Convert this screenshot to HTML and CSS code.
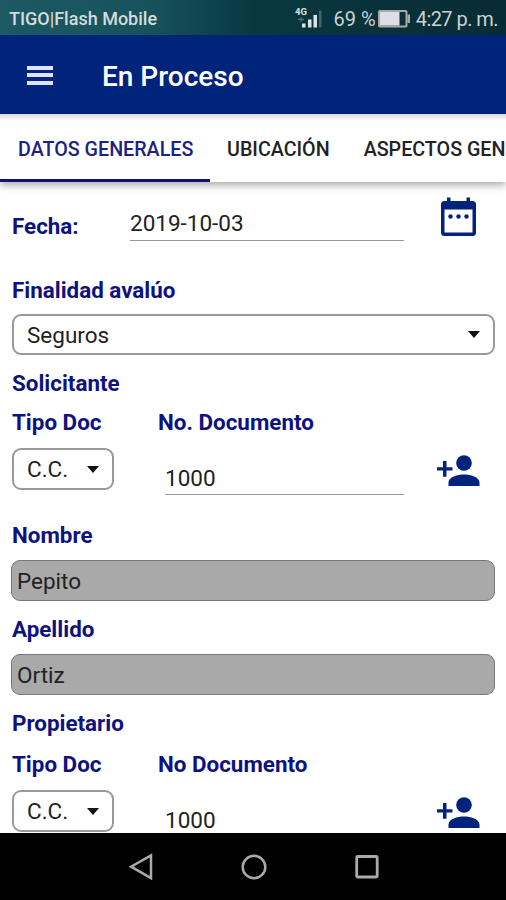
FILE: index.html
```html
<!DOCTYPE html>
<html lang="es">
<head>
  <meta charset="UTF-8">
  <meta name="viewport" content="width=device-width, initial-scale=1.0">
  <title>En Proceso</title>
  <link rel="stylesheet" href="styles.css">
</head>
<body>
  <div class="phone">
    <div class="status-bar">
      <span class="carrier">TIGO|Flash Mobile</span>
      <svg class="signal" width="30" height="26" viewBox="0 0 30 26">
        <text x="0" y="9" font-size="9.5" font-weight="700" fill="#dde3e4">4G</text>
        <g fill="#dde3e4">
          <rect x="7" y="17.5" width="3.5" height="4"/>
          <rect x="13" y="13.5" width="3.5" height="8"/>
          <rect x="18.5" y="9" width="3.5" height="12.5"/>
        </g>
        <rect x="24" y="4.5" width="2.5" height="17" fill="#47636a"/>
        <path d="M3 13.500h6M6 11.500v4" stroke="#477078" stroke-width="1.5"/>
      </svg>
      <span class="percent">69 %</span>
      <svg class="battery" width="33" height="18" viewBox="0 0 33 18">
        <rect x="1" y="1" width="27.5" height="15.5" rx="1" fill="none" stroke="#aaa8a8" stroke-width="2"/>
        <rect x="2" y="2" width="19.5" height="13.5" fill="#dedee6"/>
        <rect x="29.5" y="4.5" width="2.5" height="8.5" fill="#aaa8a8"/>
      </svg>
      <span class="clock">4:27 p. m.</span>
    </div>

    <header class="app-bar">
      <div class="menu"><i></i><i></i><i></i></div>
      <h1>En Proceso</h1>
    </header>

    <nav class="tabs">
      <a class="tab active">DATOS GENERALES</a>
      <a class="tab">UBICACIÓN</a>
      <a class="tab">ASPECTOS GENERALES</a>
    </nav>

    <main class="form">
      <div class="date-row">
        <label>Fecha:</label>
        <div class="line-input">2019-10-03</div>
        <svg class="calendar" width="36" height="40" viewBox="0 0 36 40">
          <path fill="#00237c" fill-rule="evenodd" d="M6 0.500h3.500V4h16V0.500H29V4h2.500a3.500 3.500 0 0 1 3.500 3.500v28a3.500 3.500 0 0 1-3.500 3.500h-28A3.500 3.500 0 0 1 0 35.500v-28A3.500 3.500 0 0 1 3.500 4H6zM3.500 12.500v23h28v-23z"/>
          <g fill="#00237c">
            <circle cx="9.500" cy="19.500" r="2.200"/>
            <circle cx="17.500" cy="19.500" r="2.200"/>
            <circle cx="25.500" cy="19.500" r="2.200"/>
          </g>
        </svg>
      </div>

      <label>Finalidad avalúo</label>
      <div class="select">Seguros</div>

      <label class="section">Solicitante</label>
      <div class="doc-labels">
        <label>Tipo Doc</label>
        <label>No. Documento</label>
      </div>
      <div class="doc-row">
        <div class="select small">C.C.</div>
        <div class="line-input">1000</div>
        <svg class="add-person" width="44" height="32" viewBox="0 0 44 32" fill="#00237c">
          <circle cx="27" cy="8" r="7.800"/>
          <path d="M11.500 31v-3.500c0-5.500 9-8 15.500-8s15.500 2.500 15.500 8V31zM6 6h3.500v6.200h6v3.300h-6v6.200H6v-6.200H0v-3.300h6z"/>
        </svg>
      </div>

      <label>Nombre</label>
      <div class="disabled">Pepito</div>
      <label>Apellido</label>
      <div class="disabled">Ortiz</div>

      <label>Propietario</label>
      <div class="doc-labels second">
        <label>Tipo Doc</label>
        <label>No Documento</label>
      </div>
      <div class="doc-row">
        <div class="select small">C.C.</div>
        <div class="line-input">1000</div>
        <svg class="add-person" width="44" height="32" viewBox="0 0 44 32" fill="#00237c">
          <circle cx="27" cy="8" r="7.800"/>
          <path d="M11.500 31v-3.500c0-5.500 9-8 15.500-8s15.500 2.500 15.500 8V31zM6 6h3.500v6.200h6v3.300h-6v6.200H6v-6.200H0v-3.300h6z"/>
        </svg>
      </div>
    </main>

    <footer class="nav-bar">
      <svg width="24" height="28" viewBox="0 0 24 28"><path d="M22 2.500v22.500L2 13.700z" fill="none" stroke="#aaa" stroke-width="2.500"/></svg>
      <svg width="26" height="28" viewBox="0 0 26 28"><circle cx="13" cy="14" r="11.300" fill="none" stroke="#aaa" stroke-width="2.500"/></svg>
      <svg width="24" height="28" viewBox="0 0 24 28"><rect x="1.700" y="3.500" width="20.500" height="20.500" rx="1" fill="none" stroke="#aaa" stroke-width="2.800"/></svg>
    </footer>
  </div>
</body>
</html>
```

FILE: styles.css
```css
body {
  margin: 0;
  font-family: Roboto, sans-serif;
  font-size: 22.5px;
  line-height: 26px;
  color: #222;
  background: #fff;
}

.phone {
  display: flex;
  flex-direction: column;
  height: 900px;
  overflow: hidden;
}

.status-bar {
  display: flex;
  align-items: center;
  flex: none;
  box-sizing: border-box;
  height: 35px;
  padding: 2px 8px 0 9px;
  background: linear-gradient(to right, #1b5a62, #17525b 30%, #093841 50%, #072b34);
  color: #ccd0d1;
  font-size: 20px;
  white-space: nowrap;
}

.carrier {
  flex: 1;
  font-size: 18px;
  font-weight: 500;
  color: #d5dbdc;
}

.signal {
  margin-right: 9px;
}

.percent {
  margin-right: 2px;
}

.clock {
  margin-left: 5px;
  letter-spacing: -0.55px;
}

.app-bar {
  display: flex;
  align-items: center;
  flex: none;
  height: 79px;
  background: #00237c;
  color: #fff;
}

.menu {
  display: flex;
  flex-direction: column;
  gap: 3.5px;
  width: 26px;
  margin: 1px 0 0 27px;
}

.menu i {
  height: 4px;
  background: #e3e3f8;
}

h1 {
  margin: 4px 0 0 49px;
  font-size: 28px;
  font-weight: 500;
  line-height: 34px;
}

.tabs {
  display: flex;
  flex: none;
  height: 68px;
  background: linear-gradient(#d8d8dc, #fff 7px);
  box-shadow: 0 3px 8px rgba(0, 0, 0, 0.35);
}

.tab {
  flex: none;
  box-sizing: border-box;
  height: 68px;
  padding: 23px 17px 0;
  font-size: 19.7px;
  font-weight: 500;
  white-space: nowrap;
  color: #222;
}

.tab.active {
  width: 210px;
  padding-left: 18px;
  border-bottom: 3px solid #10107c;
  color: #1c2283;
}

.form {
  flex: 1;
  min-height: 0;
  overflow: hidden;
  margin-top: 8px;
  padding: 0 11px 0 12px;
}

label {
  display: block;
  font-size: 22.4px;
  font-weight: 700;
  color: #0c1280;
}

.date-row {
  display: flex;
  align-items: flex-start;
  height: 87px;
}

.date-row label {
  width: 118px;
  padding-top: 23px;
}

.date-row .line-input {
  width: 274px;
  margin-top: 20px;
  height: 30px;
}

.calendar {
  margin: 7px 0 0 37px;
}

.line-input {
  border-bottom: 1.5px solid #999;
}

.select {
  display: flex;
  align-items: center;
  justify-content: space-between;
  box-sizing: border-box;
  height: 41px;
  margin-top: 11px;
  padding: 0 12px 0 13px;
  border: 2px solid #999;
  border-radius: 9px;
}

.select::after {
  content: "";
  margin-right: 1px;
  border: 6.5px solid transparent;
  border-top: 7px solid #111;
  border-bottom: 0;
}

.section {
  margin-top: 15px;
}

.doc-labels {
  display: grid;
  grid-template-columns: 146px 1fr;
  margin-top: 13px;
}

.doc-labels.second {
  margin-top: 15px;
}

.doc-row {
  display: flex;
  align-items: flex-start;
  height: 74px;
  margin-top: 13px;
}

.select.small {
  width: 102px;
  height: 42px;
  margin: 0;
}

.doc-row .line-input {
  width: 239px;
  height: 29px;
  margin: 17px 0 0 51px;
}

.add-person {
  margin: 7px 0 0 33px;
}

.disabled {
  box-sizing: border-box;
  height: 41px;
  margin: 12px 0 15px -1px;
  padding: 7px 5px;
  border: 1px solid #777;
  border-radius: 9px;
  background: #a9a9a9;
}

.nav-bar {
  display: flex;
  justify-content: center;
  gap: 88px;
  flex: none;
  box-sizing: border-box;
  height: 67px;
  padding: 20px 0 0 2px;
  background: #000;
}
```
